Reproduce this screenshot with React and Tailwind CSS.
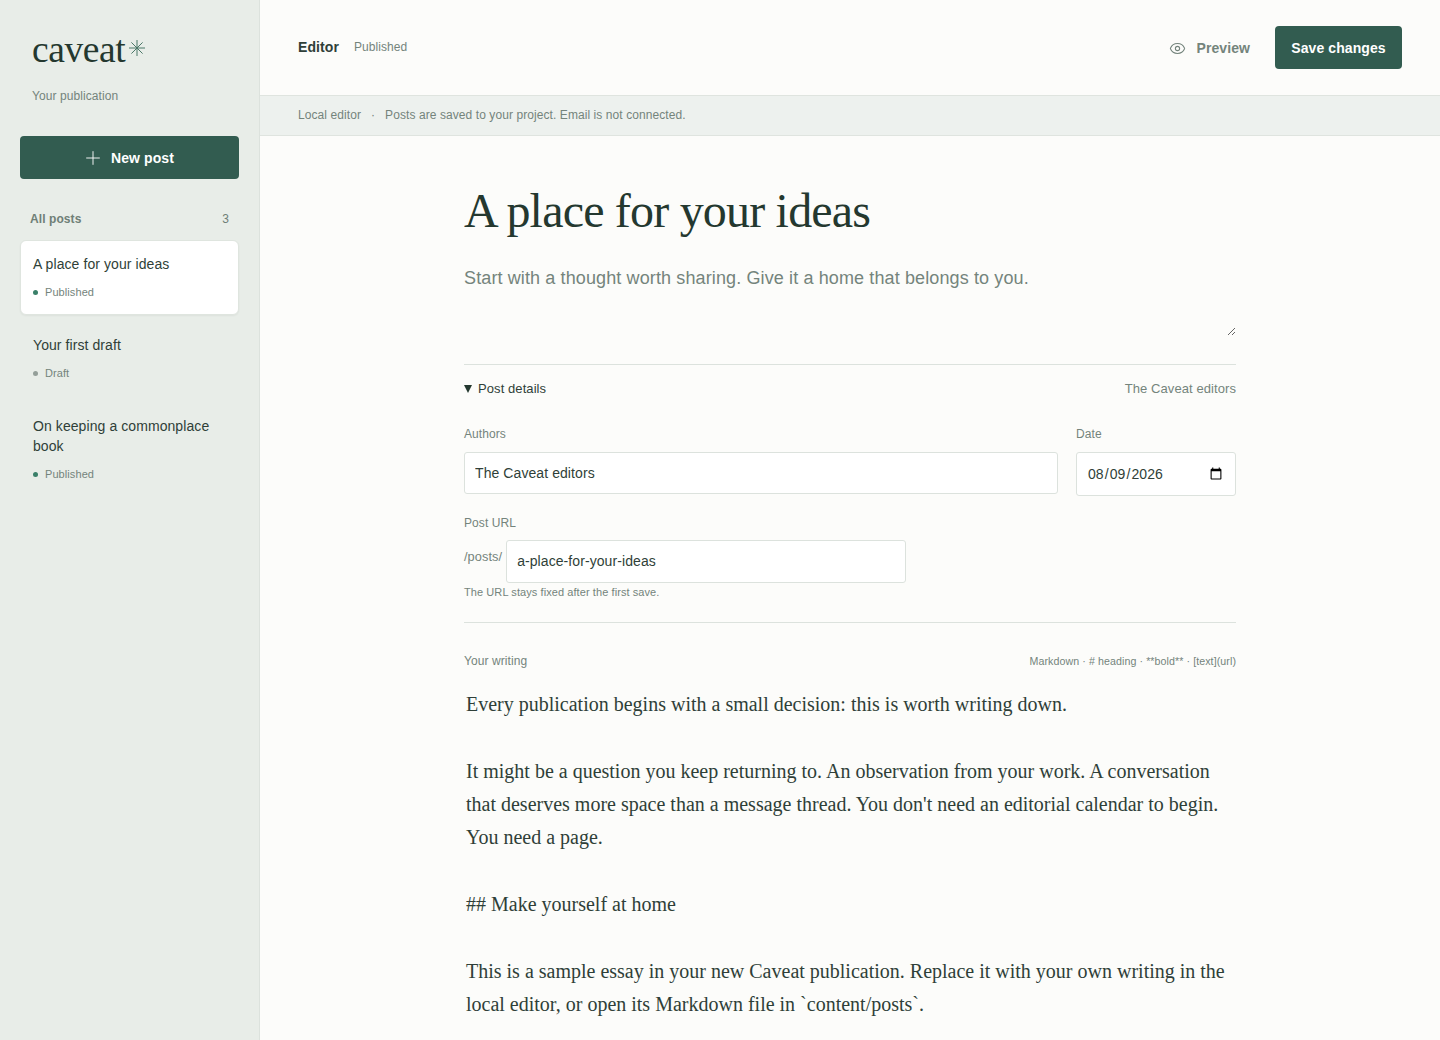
import React from 'react';
import { Eye, Plus } from 'lucide-react';

const posts = [
    { id: 1, title: 'A place for your ideas', status: 'Published', active: true },
    { id: 2, title: 'Your first draft', status: 'Draft' },
    { id: 3, title: 'On keeping a commonplace book', status: 'Published' },
];

const body = `Every publication begins with a small decision: this is worth writing down.

It might be a question you keep returning to. An observation from your work. A conversation that deserves more space than a message thread. You don't need an editorial calendar to begin. You need a page.

## Make yourself at home

This is a sample essay in your new Caveat publication. Replace it with your own writing in the local editor, or open its Markdown file in \`content/posts\`.`;

const PostItem = ({ title, status, active }) => {
    return (
        <div className={`rounded-md px-3 pt-[13px] border ${active ? 'mb-[6px] pb-[14px] bg-white border-[#dfe5df] shadow-xs' : 'mb-[7px] pb-[13px] border-transparent'}`}>
            <div className="text-[14px] leading-[20px] text-[#2f3f38]">{title}</div>
            <div className="mt-[10px] flex items-center gap-[7px] text-[11px] leading-[16px] text-[#74847c]">
                <span className={`h-[5px] w-[5px] rounded-full ${status === 'Draft' ? 'bg-[#949f99]' : 'bg-[#3a8069]'}`}></span>
                {status}
            </div>
        </div>
    );
};

const Sidebar = () => {
    return (
        <aside className="w-[260px] shrink-0 h-full bg-[#e8ede8] border-r border-[#dce2dd] px-5">
            <div className="pl-3 pt-[28px] flex items-start text-[#24382f]">
                <span className="font-['Liberation_Serif',serif] text-[37.5px] leading-[44px] tracking-[-0.4px]">caveat</span>
                <svg className="ml-[3px] mt-[11px]" width="18" height="18" viewBox="0 0 18 18" stroke="#4b7868" strokeWidth="1" fill="none">
                    <path d="M9 1v16M1 9h16M3.4 3.4l11.2 11.2M14.6 3.4 3.4 14.6" />
                </svg>
            </div>
            <div className="pl-3 mt-[16px] text-[12px] leading-[16px] text-[#74847c]">Your publication</div>
            <button className="mt-[32px] w-full h-[43px] pt-px rounded-[4px] bg-[#325c50] text-white text-[14px] font-semibold flex items-center justify-center gap-[7px]">
                <Plus className="-ml-[3px]" size={22} strokeWidth={1} />
                New post
            </button>
            <div className="mt-[32px] mb-[13px] px-[10px] flex justify-between text-[12px] leading-[16px] text-[#6f7f77]">
                <span className="font-semibold">All posts</span>
                <span>3</span>
            </div>
            {posts.map((post) => (
                <PostItem key={post.id} title={post.title} status={post.status} active={post.active} />
            ))}
        </aside>
    );
};

const Header = () => {
    return (
        <header className="h-[96px] shrink-0 border-b border-[#dfe4df] pl-[38px] pr-[38px] flex items-center justify-between">
            <div className="flex items-center gap-[15px] -mt-[1px]">
                <span className="text-[14px] font-semibold text-[#2f3f38]">Editor</span>
                <span className="text-[12px] text-[#74847c]">Published</span>
            </div>
            <div className="flex items-center gap-[25px]">
                <button className="flex items-center gap-[11px] pt-px text-[14px] font-semibold text-[#74847c]">
                    <Eye size={17} strokeWidth={1.5} />
                    Preview
                </button>
                <button className="h-[43px] w-[127px] pt-px rounded-[4px] bg-[#325c50] text-white text-[14px] font-semibold">Save changes</button>
            </div>
        </header>
    );
};

const inputClass = 'h-[42px] rounded-[3px] border border-[#dce2dd] bg-white px-[10px] text-[14px] text-[#2f3f38] outline-none';

const Details = () => {
    return (
        <details open className="border-y border-[#dce2dd] pt-[15px] pb-[22px]">
            <summary className="cursor-pointer flex items-center text-[13px] leading-[18px] text-[#2f3f38]">
                <span className="mr-[6px] h-0 w-0 border-x-[4.5px] border-t-[8px] border-x-transparent border-t-[#24382f]"></span>
                Post details
                <span className="ml-auto text-[#74847c]">The Caveat editors</span>
            </summary>
            <div className="mt-[28px] flex gap-[18px]">
                <label className="flex-1 text-[12px] leading-[16px] text-[#74847c]">
                    Authors
                    <input className={`${inputClass} mt-[10px] block w-full`} defaultValue="The Caveat editors" />
                </label>
                <label className="w-[160px] text-[12px] leading-[16px] text-[#74847c]">
                    Date
                    <input type="date" className={`${inputClass} mt-[10px] block w-full h-[44px]`} defaultValue="2026-08-09" />
                </label>
            </div>
            <div className="mt-[19px] text-[12px] leading-[16px] text-[#74847c]">Post URL</div>
            <div className="mt-[9px] flex items-start gap-[4px]">
                <span className="mt-[9px] text-[12.75px] leading-[16px] text-[#74847c]">/posts/</span>
                <input className={`${inputClass} w-[400px] h-[43px] pb-[2px]`} defaultValue="a-place-for-your-ideas" />
            </div>
            <p className="mt-[1px] text-[11px] leading-[16px] text-[#74847c]">The URL stays fixed after the first save.</p>
        </details>
    );
};

export default function App() {
    return (
        <div className="h-screen overflow-hidden flex bg-[#fcfcfa] tracking-[0.005em] font-['Liberation_Sans',sans-serif]">
            <Sidebar />
            <main className="flex-1 h-full flex flex-col overflow-hidden">
                <Header />
                <div className="h-[40px] shrink-0 pb-[2px] border-b border-[#dfe4df] bg-[#edf1ee] px-[38px] flex items-center text-[12px] text-[#74847c]">
                    Local editor<span className="mx-[10px]">·</span>Posts are saved to your project. Email is not connected.
                </div>
                <div className="w-[772px] mx-auto pt-[48px]">
                    <input
                        className="block w-full h-[54px] bg-transparent outline-none font-['Liberation_Serif',serif] text-[48px] leading-[54px] tracking-[-0.8px] text-[#24382f]"
                        defaultValue="A place for your ideas"
                    />
                    <textarea
                        className="block mt-[26px] w-full h-[72px] bg-transparent outline-none text-[18px] leading-[28px] tracking-[0.12px] text-[#74847c]"
                        defaultValue="Start with a thought worth sharing. Give it a home that belongs to you."
                    />
                    <div className="mt-[28px]">
                        <Details />
                    </div>
                    <div className="mt-[30px] flex justify-between items-center text-[#74847c]">
                        <span className="text-[12px] leading-[16px]">Your writing</span>
                        <span className="text-[10.65px] leading-[16px]">Markdown · # heading · **bold** · [text](url)</span>
                    </div>
                    <textarea
                        className="block mt-[17px] w-full h-[600px] p-[2px] bg-transparent outline-none resize-none font-['Liberation_Serif',serif] text-[20px] leading-[33.35px] tracking-normal text-[#2f3f38]"
                        defaultValue={body}
                    />
                </div>
            </main>
        </div>
    );
}
